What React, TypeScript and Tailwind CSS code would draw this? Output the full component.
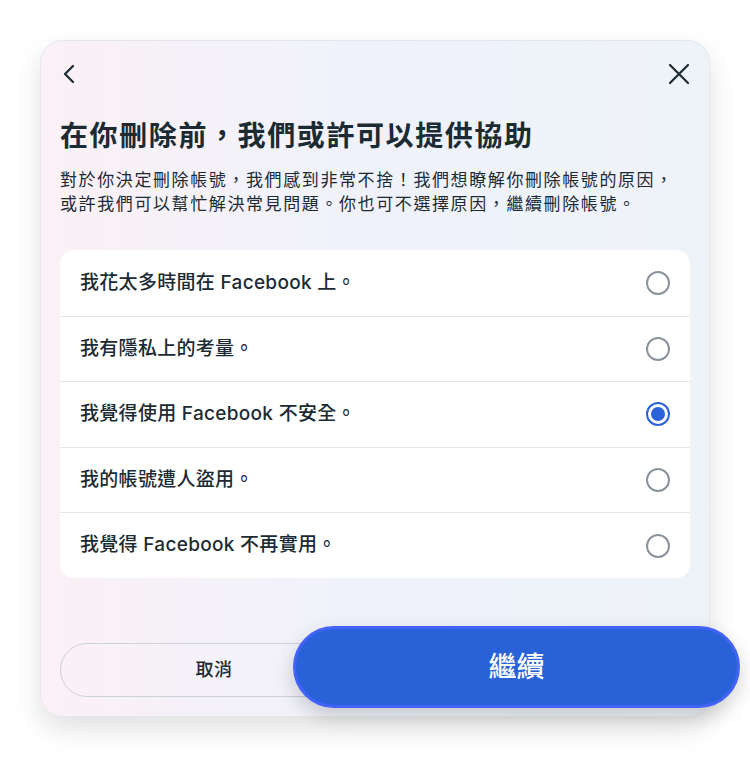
import { useState } from 'react'

const reasons = [
  '我花太多時間在 Facebook 上。',
  '我有隱私上的考量。',
  '我覺得使用 Facebook 不安全。',
  '我的帳號遭人盜用。',
  '我覺得 Facebook 不再實用。',
]

const font = { fontFamily: 'Inter, "Noto Sans CJK TC", sans-serif' }

function Radio({ checked }: { checked: boolean }) {
  if (checked) {
    return (
      <span className="flex h-[24px] w-[24px] items-center justify-center rounded-full border-2 border-[#2b62d9]">
        <span className="h-[14px] w-[14px] rounded-full bg-[#2b62d9]" />
      </span>
    )
  }
  return <span className="h-[24px] w-[24px] rounded-full border-2 border-[#8a929c]" />
}

export default function App() {
  const [selected, setSelected] = useState(2)

  return (
    <div className="min-h-[758px] w-[750px] bg-white pt-[40px] pl-[40px]" style={font}>
      <div className="flex h-[677px] w-[670px] flex-col rounded-[22px] border border-[#e3e6ec] bg-linear-to-r from-[#fbf1f6] via-[#eff2fb] to-[#eef3f8] px-[19px] shadow-[0_12px_28px_rgba(0,0,0,0.12)]">
        <div className="flex items-center justify-between pt-[22px] pl-[2px] pr-[0px]">
          <svg width="14" height="20" viewBox="0 0 14 20" fill="none">
            <path d="M11 2 3 10l8 8" stroke="#1c2b33" strokeWidth="2.2" strokeLinecap="round" strokeLinejoin="round" />
          </svg>
          <svg width="22" height="22" viewBox="0 0 22 22" fill="none">
            <path d="M2 2l18 18M20 2 2 20" stroke="#1c2b33" strokeWidth="2.2" strokeLinecap="round" />
          </svg>
        </div>

        <h1 className="mt-[33px] text-[28px] leading-[36px] font-bold tracking-[1.6px] text-[#1c2b33]">
          在你刪除前，我們或許可以提供協助
        </h1>
        <p className="mt-[14px] text-[17px] leading-[24px] tracking-[1.6px] text-[#1c2b33]">
          對於你決定刪除帳號，我們感到非常不捨！我們想瞭解你刪除帳號的原因，或許我們可以幫忙解決常見問題。你也可不選擇原因，繼續刪除帳號。
        </p>

        <div className="mt-[34px] overflow-hidden rounded-[14px] bg-white">
          {reasons.map((r, i) => (
            <button
              key={r}
              onClick={() => setSelected(i)}
              className={`flex h-[65.6px] w-full items-center justify-between pr-[20px] pl-[20px] text-left ${
                i > 0 ? 'border-t border-[#e4e6ea]' : ''
              }`}
            >
              <span className="text-[19px] font-medium tracking-[0.3px] text-[#1c2b33]">{r}</span>
              <Radio checked={selected === i} />
            </button>
          ))}
        </div>

        <div className="relative mt-[65px] flex h-[54px]">
          <button className="h-[54px] w-[308px] rounded-full border border-[#cbd2d9] text-[18px] font-medium tracking-[0.5px] text-[#1c2b33]">
            取消
          </button>
          <button className="absolute top-[-17px] left-[233px] flex h-[82px] w-[447px] items-center justify-center rounded-full border-[3px] border-[#4262fa] bg-[#2962d8] text-[28px] font-medium text-white shadow-[0_8px_20px_rgba(0,0,0,0.18)]">
            繼續
          </button>
        </div>
      </div>
    </div>
  )
}
